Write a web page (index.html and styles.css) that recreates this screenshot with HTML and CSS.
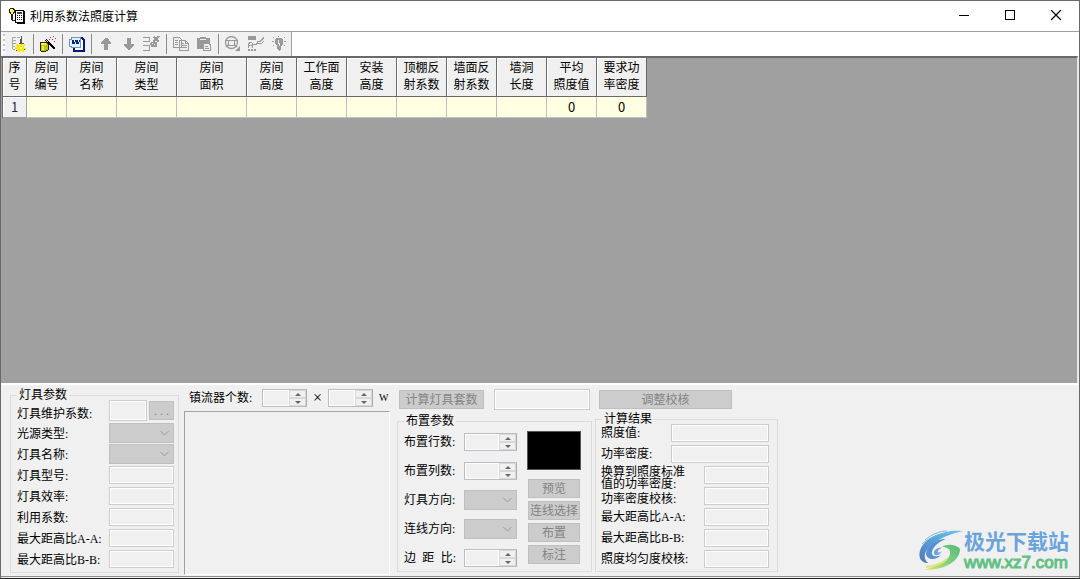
FILE: index.html
```html
<!DOCTYPE html>
<html lang="zh-CN">
<head>
<meta charset="utf-8">
<title>利用系数法照度计算</title>
<link rel="stylesheet" href="styles.css">
</head>
<body>
<div class="window">
  <header class="titlebar">
    <svg class="app-icon" width="16" height="16" viewBox="0 0 16 16" shape-rendering="crispEdges"><path d="M1 0h3l2 2v2l-2 3h-2l-2-3v-3z" fill="#222"/><path d="M1 1h3v1h1v2h-1v2h-2v-2h-1z" fill="#fff04a"/><path d="M2 7h2v5h3v1h-4v-1h-1z" fill="#222"/><path d="M6.500 2.500h8v12h-8z" fill="#fff" stroke="#000"/><path d="M8 4h5v2h-5z" fill="#444"/><path d="M8 7h1v1h-1zM10 7h1v1h-1zM12 7h1v1h-1zM8 9h1v1h-1zM10 9h1v1h-1zM12 9h1v1h-1zM8 11h1v1h-1zM10 11h1v1h-1zM12 11h1v1h-1zM15 3h1v13h-8v-1h7z" fill="#111"/></svg>
    <h1>利用系数法照度计算</h1>
    <div class="controls">
      <button aria-label="最小化"><svg width="12" height="12" viewBox="0 0 12 12" shape-rendering="crispEdges"><path d="M1 5h10v1h-10z"/></svg></button>
      <button aria-label="最大化"><svg width="12" height="12" viewBox="0 0 12 12" shape-rendering="crispEdges"><path d="M1.500 .5h9v9h-9z" fill="none" stroke="#000"/></svg></button>
      <button aria-label="关闭"><svg width="12" height="12" viewBox="0 0 12 12"><path d="M1 0l10 10M11 0L1 10" stroke="#000" stroke-width="1.200"/></svg></button>
    </div>
  </header>
  <div class="toolbar-row">
    <div class="toolbar">
      <span class="grip"></span>
      <button aria-label="参数设置"><svg width="16" height="16" viewBox="0 0 16 16" shape-rendering="crispEdges"><path d="M1 1h4v1h-4zM6 1h3v1h-3zM1 4h4v1h-4zM1 7h4v1h-4zM1 10h3v1h-3zM1 1h1v12h-1zM2 13h2v1h-2z" fill="#aaa"/><path d="M5 8h2v1h2v-2h2v2h2v-1h1v2h-1v2h2v2h-2v2h-2v-1h-2v1h-2v-1h-2v-1h1v-1h-2v-2h2v-1h-1z" fill="#ffe600"/><path d="M9 11h2v2h-2z" fill="#fff"/><path d="M10 0h1v8h-3v-1h1v-4h1zM11 7h2v1h-2zM13 13h1v1h-1zM5 14h1v1h-1z" fill="#555"/></svg></button>
      <span class="sep"></span>
      <button aria-label="自动计算"><svg width="18" height="16" viewBox="0 0 18 16" shape-rendering="crispEdges"><path d="M1 7l2-1h4l2 2v6l-2 1h-5l-1-2z" fill="#b8c800" stroke="#222"/><path d="M2 7h5v2h-5z" fill="#fff34d"/><path d="M3 10h2v4h-2z" fill="#eff05a"/><path d="M7 4l9 9" stroke="#000" stroke-width="2"/><path d="M7 4l2 2" stroke="#ddd"/><path d="M11 1h1v1h-1zM14 0h1v1h-1zM13 3h1v1h-1zM16 2h1v1h-1zM15 5h1v1h-1zM10 3h1v1h-1z" fill="#a52a40"/></svg></button>
      <span class="sep"></span>
      <button aria-label="输出到 Word"><svg width="17" height="16" viewBox="0 0 17 16" shape-rendering="crispEdges"><path d="M6 2h8l2 2v11h-10z" fill="#fff"/><path d="M13 2h1l2 2v11h-10v-3" fill="none" stroke="#0a1486" stroke-width="2"/><path d="M1.500 3.500h2v-2h9v10h-9v-1h-2z" fill="#e4f2ff" stroke="#6c96c4"/><path d="M4 4h1l1 4l2-4h1l1 4l2-4" fill="none" stroke="#00288c"/><path d="M4 4h2v4h-2zM8 4h1v4h-1z" fill="#00288c"/></svg></button>
      <span class="sep"></span>
      <button disabled aria-label="上移"><svg width="16" height="16" viewBox="0 0 16 16" shape-rendering="crispEdges"><path d="M7 2h2l1 1l1 1l2 3v1h-3v6h-4v-6h-3v-1z"/></svg></button>
      <button disabled aria-label="下移"><svg width="16" height="16" viewBox="0 0 16 16" shape-rendering="crispEdges"><path d="M6 2h4v6h3v1l-4 5h-2l-4-5v-1h3z"/></svg></button>
      <button disabled aria-label="删除行"><svg width="17" height="16" viewBox="0 0 17 16" shape-rendering="crispEdges"><path d="M0 1h7v1h-7zM6 1h1v4h-1zM0 5h7v1h-7zM0 9h7v1h-7zM6 9h1v5h-1zM0 14h7v1h-7zM8 6h6v5h-6zM7 7h1v2h-1z"/><path d="M11 1l5 5M16 0l-6 6" stroke="#999" stroke-width="2"/><path d="M9 7h1v1h-1zM11 8h1v1h-1z" fill="#eee"/></svg></button>
      <span class="sep"></span>
      <button disabled aria-label="复制"><svg width="16" height="16" viewBox="0 0 16 16" shape-rendering="crispEdges"><path d="M.5 1.500h6l2 2v8h-8zM6.500 4.500h6l3 3v7h-9z" fill="#eee" stroke="#999"/><path d="M2 4h3v1h-3zM2 6h3v1h-3zM2 8h3v1h-3zM8 7h3v1h-3zM8 9h6v1h-6zM8 11h6v1h-6zM12 4h1v3h3v1h-4z"/></svg></button>
      <button disabled aria-label="粘贴"><svg width="16" height="16" viewBox="0 0 16 16" shape-rendering="crispEdges"><path d="M1 2h3v-1h6v1h4v6h1v7h-8v-2h-6z"/><path d="M4 3h6v1h-6zM8 8h4l2 2v4h-6z" fill="#eee"/><path d="M9 10h3v1h-3zM9 12h4v1h-4z"/></svg></button>
      <span class="sep"></span>
      <button disabled aria-label="预览"><svg width="17" height="16" viewBox="0 0 17 16"><circle cx="7.500" cy="6.500" r="6" fill="none" stroke="#999" stroke-width="1.300"/><path d="M4.500 4.500h6v5h-6zM1 4.500h3M11 4.500h3M4 9l-2 2M11 9l2 2" fill="none" stroke="#999" stroke-width="1.200"/><path d="M16 10v5h-5z"/></svg></button>
      <button disabled aria-label="标注"><svg width="18" height="16" viewBox="0 0 18 16" shape-rendering="crispEdges"><path d="M1 0h8v4h-8zM1 13h2v2h-2zM4 13h2v2h-2zM7 13h2v2h-2z"/><path d="M1.500 12v-4l2-2h1l1 2v4M1 9.500h4M6 8.500h3l2-3h2l4-4M9 7.500h5l3-2" fill="none" stroke="#999"/></svg></button>
      <button disabled aria-label="灯具"><svg width="16" height="16" viewBox="0 0 16 16" shape-rendering="crispEdges"><path d="M5 2h5l2 2v4l-2 2v4l-2 1l-2-2v-3l-2-2v-5zM2 1h1v1h-1zM7 0h1v1h-1zM13 1h1v1h-1zM1 5h2v1h-2zM13 5h2v1h-2zM2 9h1v1h-1zM13 9h1v1h-1z"/><path d="M7 4h1v3h1v3h-1v-2h-1z" fill="#eee"/></svg></button>
    </div>
  </div>
  <main class="sheet">
    <table>
      <colgroup><col class="c24"><col class="c40"><col class="c50"><col class="c60"><col class="c70"><col class="c50"><col class="c50"><col class="c50"><col class="c50"><col class="c50"><col class="c50"><col class="c50"><col class="c50"></colgroup>
      <thead><tr><th>序<br>号</th><th>房间<br>编号</th><th>房间<br>名称</th><th>房间<br>类型</th><th>房间<br>面积</th><th>房间<br>高度</th><th>工作面<br>高度</th><th>安装<br>高度</th><th>顶棚反<br>射系数</th><th>墙面反<br>射系数</th><th>墙洞<br>长度</th><th>平均<br>照度值</th><th>要求功<br>率密度</th></tr></thead>
      <tbody><tr><th>1</th><td></td><td></td><td></td><td></td><td></td><td></td><td></td><td></td><td></td><td></td><td>0</td><td>0</td></tr></tbody>
    </table>
  </main>
  <section class="panel">
    <fieldset class="lamp">
      <legend>灯具参数</legend>
      <div class="rows">
        <label class="low" for="maint">灯具维护系数:</label><div class="pair"><input id="maint" disabled><button class="btn" disabled>. . .</button></div>
        <label for="source">光源类型:</label><select id="source" disabled></select>
        <label for="name">灯具名称:</label><select id="name" disabled></select>
        <label for="model">灯具型号:</label><input id="model" disabled>
        <label for="eff">灯具效率:</label><input id="eff" disabled>
        <label for="util">利用系数:</label><input id="util" disabled>
        <label for="laa">最大距高比A-A:</label><input id="laa" disabled>
        <label for="lbb">最大距高比B-B:</label><input id="lbb" disabled>
      </div>
    </fieldset>
    <div class="ballast">
      <div class="ballast-row">
        <label for="count">镇流器个数:</label>
        <div class="spin"><input id="count" disabled><span class="arrows"><button disabled aria-label="增加"></button><button disabled aria-label="减少"></button></span></div>
        <span class="times">×</span>
        <div class="spin"><input id="watt" aria-label="功率" disabled><span class="arrows"><button disabled aria-label="增加"></button><button disabled aria-label="减少"></button></span></div>
        <label class="unit" for="watt">W</label>
      </div>
      <div class="preview-box"></div>
    </div>
    <div class="arrange">
      <div class="top-row"><button class="btn" disabled>计算灯具套数</button><input aria-label="灯具套数" disabled></div>
      <fieldset>
        <legend>布置参数</legend>
        <div class="arrange-body">
          <div class="rows">
            <label for="nrow">布置行数:</label><div class="spin"><input id="nrow" disabled><span class="arrows"><button disabled aria-label="增加"></button><button disabled aria-label="减少"></button></span></div>
            <label for="ncol">布置列数:</label><div class="spin"><input id="ncol" disabled><span class="arrows"><button disabled aria-label="增加"></button><button disabled aria-label="减少"></button></span></div>
            <label for="ldir">灯具方向:</label><select id="ldir" disabled></select>
            <label for="cdir">连线方向:</label><select id="cdir" disabled></select>
            <label class="spread" for="edge"><span>边</span><span>距</span><span>比:</span></label><div class="spin"><input id="edge" disabled><span class="arrows"><button disabled aria-label="增加"></button><button disabled aria-label="减少"></button></span></div>
          </div>
          <div class="actions">
            <div class="screen"></div>
            <button class="btn" disabled>预览</button>
            <button class="btn" disabled>连线选择</button>
            <button class="btn" disabled>布置</button>
            <button class="btn" disabled>标注</button>
          </div>
        </div>
      </fieldset>
    </div>
    <div class="result">
      <button class="btn" disabled>调整校核</button>
      <fieldset>
        <legend>计算结果</legend>
        <div class="rows">
          <label for="lux">照度值:</label><input class="wide" id="lux" disabled>
          <label for="dens">功率密度:</label><input class="wide" id="dens" disabled>
          <label class="two-line" for="conv">换算到照度标准<br>值的功率密度:</label><input id="conv" disabled>
          <label class="low" for="check">功率密度校核:</label><input id="check" disabled>
          <label for="raa">最大距高比A-A:</label><input id="raa" disabled>
          <label for="rbb">最大距高比B-B:</label><input id="rbb" disabled>
          <label for="even">照度均匀度校核:</label><input id="even" disabled>
        </div>
      </fieldset>
    </div>
  </section>
  <div class="watermark">
    <svg width="46" height="42" viewBox="0 0 46 42">
      <defs><linearGradient id="sky" x1="0" y1="1" x2="1" y2="0"><stop offset="0" stop-color="#4f79bd"/><stop offset="1" stop-color="#62c8ef"/></linearGradient><linearGradient id="leaf" x1="0" y1="1" x2="1" y2="0"><stop offset="0" stop-color="#e9e85c"/><stop offset=".5" stop-color="#80cf80"/><stop offset="1" stop-color="#55bd77"/></linearGradient></defs>
      <path d="M45 1C29-1 9 6 3 18C-1 27 3 33 10 33C3 27 8 17 19 11C27 6 35 3 45 1Z" fill="url(#sky)"/>
      <path d="M7 10C14 4 22 1 29 1M4 14C11 8 20 3 31 3" fill="none" stroke="#7bb8e3"/>
      <path d="M28 9C17 9 8 17 8 24C9 31 19 30 23 25C18 28 13 26 14 22C15 16 22 11 28 9Z" fill="#5690cf"/>
      <path d="M24 18C20 17 15 20 16 24C18 27 23 24 24 21C22 23 19 23 20 21C21 19 22 19 24 18Z" fill="#68a8dd"/>
      <path d="M24 17C29 13 39 15 42 19C42 29 31 40 5 40C18 37 31 31 32 24C33 19 29 17 24 17Z" fill="url(#leaf)"/>
      <path d="M8 37C18 36 25 33 29 29" fill="none" stroke="#dce677" stroke-width="2"/>
    </svg>
    <div class="brand"><strong>极光下载站</strong><span>www.xz7.com</span></div>
  </div>
</div>
</body>
</html>
```
FILE: styles.css
```css
* { box-sizing: border-box; }
body {
  margin: 0;
  font: 12px/18px "Liberation Serif", "Noto Sans CJK SC", serif;
  color: #000;
}
button, input, select { font: inherit; margin: 0; padding: 0; }
svg { display: block; }

.window {
  position: relative;
  display: flex;
  flex-direction: column;
  min-height: 100vh;
  background: #f0f0f0;
  border: 1px solid #696969;
  border-bottom-color: #222;
}
.titlebar {
  display: flex;
  align-items: center;
  height: 31px;
  padding: 0 0 1px 8px;
  background: #fff;
  border-bottom: 1px solid #a0a0a0;
}
.titlebar h1 {
  flex: 1;
  margin: 0 0 0 5px;
  font: 12px/18px "Noto Sans CJK SC", sans-serif;
}
.controls { display: flex; }
.controls button {
  display: grid;
  place-items: center;
  width: 46px;
  height: 28px;
  border: 0;
  background: none;
}

.toolbar-row { display: flex; height: 24px; background: #fff; padding-left: 1px; }
.toolbar {
  display: flex;
  align-items: center;
  background: #f0f0f0;
  border-right: 1px solid #a0a0a0;
}
.toolbar button {
  display: grid;
  place-items: center;
  width: 23px;
  height: 22px;
  padding-right: 2px;
  border: 0;
  background: none;
}
.toolbar button:disabled svg { fill: #999; }
.grip {
  width: 2px;
  height: 20px;
  margin: 0 3px 0 1px;
  background: repeating-linear-gradient(#c4c4c4 0 2px, #fff 2px 5px);
}
.sep { width: 6px; height: 20px; padding: 0 3px 0 2px; background: #8c8c8c content-box; }

.sheet {
  flex: 1;
  margin-right: 1px;
  padding-left: 1px;
  background: #a0a0a0;
  border-top: 2px solid #696969;
  border-right: 1px solid #e3e3e3;
}
table {
  width: 645px;
  table-layout: fixed;
  border-collapse: separate;
  border-spacing: 0;
  font: 12px/17px "Noto Sans CJK SC", sans-serif;
  border-left: 1px solid #696969;
}
.c24 { width: 24px; }
.c40 { width: 40px; }
.c50 { width: 50px; }
.c60 { width: 60px; }
.c70 { width: 70px; }
th, td { padding: 0; font-weight: normal; text-align: center; }
th {
  background: #f0f0f0;
  border-right: 1px solid #696969;
  border-bottom: 1px solid #696969;
  box-shadow: inset 1px 1px #fff;
}
thead th { height: 39px; padding-bottom: 4px; white-space: nowrap; }
tbody th, td { height: 21px; padding-bottom: 2px; font-size: 13px; }
tbody th { border-color: #a0a0a0; color: #222c4c; }
td { background: #ffffe1; border-right: 1px solid #c0c0c0; border-bottom: 1px solid #c0c0c0; }

.panel {
  display: flex;
  align-items: flex-start;
  gap: 5px;
  margin-bottom: 1px;
  padding: 4px 8px 1px 9px;
  border-top: 2px solid #fff;
  border-bottom: 1px solid #8c8c8c;
}
fieldset { margin: 0; min-width: 0; border: 1px solid #dcdcdc; padding: 0 4px 3px 6px; }
legend { padding: 0 2px; line-height: 8px; }
label { white-space: nowrap; }
.panel input {
  width: 100%;
  min-width: 0;
  height: 18px;
  border: 1px solid #ccc;
  background: #f0f0f0;
  box-shadow: inset 0 0 0 1px #fff;
}
.panel select {
  width: 100%;
  height: 20px;
  appearance: none;
  border: 1px solid #bfbfbf;
  border-radius: 0;
  opacity: 1;
  background: #ccc url("data:image/svg+xml,%3Csvg xmlns='http://www.w3.org/2000/svg' width='9' height='6'%3E%3Cpath d='M.5 1l4 4l4-4' fill='none' stroke='%23999'/%3E%3C/svg%3E") no-repeat right 4px center;
}
.btn {
  height: 19px;
  border: 1px solid #bfbfbf;
  background: #ccc;
  color: #838383;
  line-height: 16px;
  white-space: nowrap;
}
.rows { display: grid; align-items: center; }

.lamp { width: 169px; margin-top: 2px; }
.lamp .rows { grid-template-columns: 92px 1fr; grid-template-rows: 23px; grid-auto-rows: 21px; }
.lamp label { padding-top: 2px; }
.pair { display: grid; grid-template-columns: 38px 1fr; gap: 2px; align-items: center; }
.pair input { height: 21px; }
.rows .low { padding-top: 6px; }

.ballast { width: 206px; }
.ballast-row { display: flex; align-items: center; height: 18px; padding-left: 5px; }
.ballast-row label:first-child { width: 73px; }
.ballast-row .spin { width: 45px; }
.times { width: 21px; text-align: center; font-size: 16px; }
.unit { margin-left: 6px; font-size: 10px; }
.preview-box {
  height: 164px;
  margin-top: 4px;
  border: 1px solid #fff;
  border-top-color: #a0a0a0;
  border-left-color: #a0a0a0;
}

.spin { display: flex; height: 18px; border: 1px solid #bcbcc4; border-right-color: #acacb4; }
.panel .spin input { flex: 1; width: 0; height: 16px; border: 0; }
.arrows { display: grid; width: 17px; grid-template-rows: 1fr 1fr; }
.arrows button {
  display: grid;
  place-items: center;
  min-height: 0;
  border: 1px solid #d8d8d8;
  background: #f0f0f0;
}
.arrows button::before {
  content: "";
  border: 3px solid transparent;
  border-top: 0;
  border-bottom-color: #666;
}
.arrows button:last-child::before { border-top: 3px solid #666; border-bottom: 0; }

.arrange { width: 195px; margin-left: 2px; }
.top-row { display: flex; align-items: center; gap: 10px; padding: 0 2px; height: 21px; }
.top-row .btn { width: 85px; }
.top-row input { flex: 1; width: 0; height: 21px; }
.arrange fieldset { margin-top: 7px; }
.arrange-body { display: flex; gap: 10px; padding-top: 6px; }
.arrange-body .rows {
  width: 113px;
  padding-top: 1px;
  grid-template-columns: 60px 1fr;
  grid-template-rows: 20px 20px 20px 20px 20px;
  row-gap: 9px;
}
.spread { display: flex; justify-content: space-between; padding-right: 8px; }
.actions { display: grid; gap: 3px; width: 54px; align-content: start; }
.screen { height: 39px; margin-bottom: 6px; background: #000; border: 1px solid #555; }
.actions .btn { margin: 0 1px; height: 19px; }

.result { width: 183px; margin-left: -2px; padding-top: 1px; }
.result > .btn { display: block; width: 133px; margin-left: 4px; }
.result fieldset { margin-top: 6px; padding-right: 8px; padding-left: 5px; }
.result legend { margin-left: 1px; }
.result .rows {
  grid-template-columns: 70px 33px 1fr;
  grid-auto-rows: 18px;
  row-gap: 3px;
  padding-top: 1px;
}
.result label { grid-column: 1 / 3; }
.result input { grid-column: 3; }
.result label:has(+ .wide) { grid-column: 1; }
.result .wide { grid-column: 2 / 4; }
.rows .two-line { align-self: start; line-height: 12px; }

.watermark { position: absolute; right: 10px; bottom: 6px; display: flex; align-items: center; }
.brand { display: flex; flex-direction: column; font-family: "Liberation Sans", "Noto Sans CJK SC", sans-serif; }
.brand strong { font-size: 21px; line-height: 24px; color: #6ba3dc; }
.brand span { font-size: 17px; line-height: 18px; color: #62c184; -webkit-text-stroke: 1px #62c184; }
```
